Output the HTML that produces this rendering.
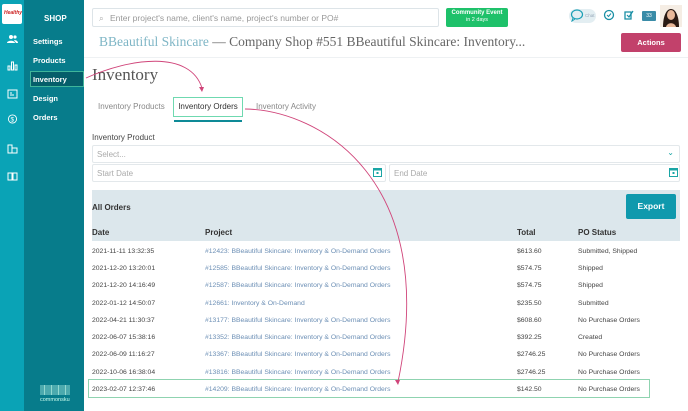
<!DOCTYPE html>
<html><head><meta charset="utf-8">
<style>
*{box-sizing:border-box;margin:0;padding:0}
body{width:688px;height:411px;overflow:hidden;background:#fff;font-family:"Liberation Sans",sans-serif;position:relative;color:#333}
.icol{position:absolute;left:0;top:0;width:24px;height:411px;background:#0aa3b6}
.ncol{position:absolute;left:24px;top:0;width:60px;height:411px;background:#077c8b}
.logo{position:absolute;left:2px;top:4px;width:20px;height:20px;background:#fff;border-radius:2px}
.logo span{position:absolute;left:2px;top:6px;font-size:5px;color:#c22;font-style:italic;font-weight:bold}
.nav{position:absolute;left:33px;font-size:7.5px;font-weight:bold;color:#fff}
.shop{position:absolute;left:44px;top:14px;font-size:8px;font-weight:bold;color:#fff}
.inv{position:absolute;left:30px;top:71px;width:54px;height:16px;background:#055e6a;border:1px solid #3fb59a}
.ic{position:absolute;left:7px;width:11px;height:10px}
.search{position:absolute;left:92px;top:8px;width:347px;height:19px;border:1px solid #dde4e8;border-radius:2px;font-size:8.5px;color:#999;padding:4px 0 0 17px}
.comm{position:absolute;left:446px;top:8px;width:62px;height:19px;background:#1ec16a;border-radius:2px;color:#fff;text-align:center;font-size:5.5px;line-height:7px;padding-top:2px}
.comm b{font-size:6px}
.title{position:absolute;left:99px;top:34px;font-family:"Liberation Serif",serif;font-size:13.5px;color:#666;white-space:nowrap}
.title span{color:#7fb6c6}
.act{position:absolute;left:621px;top:33px;width:60px;height:19px;background:#c2416b;color:#fff;font-size:7.5px;font-weight:bold;text-align:center;line-height:19px;border-radius:2px}
.hr{position:absolute;left:84px;top:57px;width:604px;height:1px;background:#eef1f3}
.h1{position:absolute;left:92px;top:65px;font-family:"Liberation Serif",serif;font-size:17px;color:#555}
.tab{position:absolute;top:102px;font-size:8px;color:#888}
.tabact{position:absolute;left:173px;top:97px;width:70px;height:20px;border:1px solid #6fd9b0;font-size:8px;color:#333;text-align:center;line-height:18px}
.tabline{position:absolute;left:174px;top:120px;width:68px;height:2px;background:#0e8a97}
.lbl{position:absolute;left:92px;top:133px;font-size:8px;color:#444}
.fld{position:absolute;height:18px;border:1px solid #e3e8eb;border-radius:2px;font-size:8px;color:#aaa;padding:4px 0 0 4px}
.panel{position:absolute;left:92px;top:190px;width:588px;height:51px;background:#dce7ec}
.ao{position:absolute;left:92px;top:203px;font-size:8px;font-weight:bold;color:#333}
.exp{position:absolute;left:626px;top:194px;width:50px;height:25px;background:#0f99ad;color:#fff;font-size:8.5px;font-weight:bold;text-align:center;line-height:25px;border-radius:2px}
.th{position:absolute;top:228px;font-size:8px;font-weight:bold;color:#333}
.row{position:absolute;left:92px;width:588px;font-size:6.8px;color:#444;height:17px}
.row div{position:absolute;top:3px;white-space:nowrap}
.row .p{left:113px;color:#6c8fb5}.row .t{left:425px}.row .s{left:486px}
.hl{position:absolute;left:88px;top:379px;width:562px;height:19px;border:1px solid #8fd3b0}
</style></head><body>
<div class="icol"></div><div class="ncol"></div>
<div class="logo"><span>Healthy</span></div>
<svg class="ic" style="top:34px" viewBox="0 0 11 10"><circle cx="4" cy="3" r="2" fill="#fff"/><circle cx="8" cy="3" r="1.6" fill="#fff"/><path d="M0 9c0-3 8-3 8 0zM7 6c2 0 4 1 4 3H9z" fill="#fff"/></svg>
<svg class="ic" style="top:61px" viewBox="0 0 11 10"><path d="M1 5h2v4H1zM4.5 1h2v8h-2zM8 4h2v5H8z" fill="none" stroke="#fff"/></svg>
<svg class="ic" style="top:89px" viewBox="0 0 11 10"><rect x="1" y="1" width="9" height="8" fill="none" stroke="#fff"/><path d="M3 4h2M3 6h4" stroke="#fff"/></svg>
<svg class="ic" style="top:114px" viewBox="0 0 11 11"><circle cx="5.5" cy="5.5" r="4.5" fill="none" stroke="#fff"/><text x="3.3" y="8" font-size="7" fill="#fff" font-family="Liberation Sans">$</text></svg>
<svg class="ic" style="top:144px" viewBox="0 0 11 10"><path d="M1 1h4v8H1zM5 4h5v5H5z" fill="none" stroke="#fff"/></svg>
<svg class="ic" style="top:171px" viewBox="0 0 11 10"><path d="M1 2h4v7H1zM6 2h4v7H6z" fill="none" stroke="#fff"/></svg>
<div class="shop">SHOP</div>
<div class="nav" style="top:37px">Settings</div>
<div class="nav" style="top:56px">Products</div>
<div class="inv"></div>
<div class="nav" style="top:75px">Inventory</div>
<div class="nav" style="top:94px">Design</div>
<div class="nav" style="top:113px">Orders</div>
<svg style="position:absolute;left:40px;top:385px" width="31" height="18"><g stroke="#cfe" stroke-width=".7"><path d="M1 0v10M3 0v10M4.5 0v10M6 0v10M8 0v10M10 0v10M11.5 0v10M13 0v10M15 0v10M17 0v10M18.5 0v10M20 0v10M22 0v10M24 0v10M25.5 0v10M27 0v10M29 0v10"/></g><text x="0" y="16" font-size="5.5" fill="#cfe" font-family="Liberation Sans">commonsku</text></svg>
<div class="search"><span style="position:absolute;left:6px;top:4px;color:#aaa">⌕</span>Enter project's name, client's name, project's number or PO#</div>
<div class="comm"><b>Community Event</b><br>in 2 days</div>
<div style="position:absolute;left:569px;top:9px;width:27px;height:14px;background:#e3eef2;border-radius:7px"></div>
<svg style="position:absolute;left:570px;top:9px" width="14" height="13"><ellipse cx="7" cy="5.5" rx="5.5" ry="4.5" fill="none" stroke="#1a9fb5" stroke-width="1.2"/><path d="M3 9l-1 3 3-2" fill="none" stroke="#1a9fb5"/></svg>
<div style="position:absolute;left:585px;top:13px;font-size:4.5px;color:#9ab">Chat</div>
<svg style="position:absolute;left:603px;top:9px" width="12" height="12"><circle cx="6" cy="6" r="4.5" fill="none" stroke="#1a8fa5" stroke-width="1.3"/><path d="M4 6l1.5 1.5L8 4.5" fill="none" stroke="#1a8fa5"/></svg>
<svg style="position:absolute;left:623px;top:9px" width="12" height="12"><path d="M2 3h6v7H2z" fill="none" stroke="#1a8fa5" stroke-width="1.3"/><path d="M4 6l2 2 4-6" fill="none" stroke="#1a8fa5" stroke-width="1.2"/></svg>
<div style="position:absolute;left:642px;top:11px;width:14px;height:10px;background:#3a8ca8;color:#fff;font-size:5px;text-align:center;line-height:10px;border-radius:1px">33</div>
<svg style="position:absolute;left:660px;top:5px" width="22" height="22"><rect width="22" height="22" fill="#f5ede4"/><path d="M3 22c0-10 3-18 8-18s8 8 8 18z" fill="#2a1a14"/><ellipse cx="11" cy="10" rx="4" ry="5" fill="#e8b89a"/><path d="M6 22c1-5 9-5 10 0z" fill="#e8b89a"/></svg>
<div class="title"><span>BBeautiful Skincare</span> — Company Shop #551 BBeautiful Skincare: Inventory...</div>
<div class="act">Actions</div>
<div class="hr"></div>
<div class="h1">Inventory</div>
<div class="tab" style="left:98px">Inventory Products</div>
<div class="tabact">Inventory Orders</div>
<div class="tabline"></div>
<div class="tab" style="left:256px">Inventory Activity</div>
<div class="lbl">Inventory Product</div>
<div class="fld" style="left:92px;top:145px;width:588px">Select...<span style="position:absolute;right:5px;top:2px;color:#1aa5a5;font-size:8px">⌄</span></div>
<div class="fld" style="left:92px;top:164px;width:294px">Start Date</div>
<div class="fld" style="left:389px;top:164px;width:291px">End Date</div>
<svg style="position:absolute;left:373px;top:167px" width="9" height="10"><rect x=".5" y="1.5" width="8" height="8" fill="none" stroke="#1aa5a5"/><rect x="0" y="1" width="9" height="2.5" fill="#1aa5a5"/><rect x="3.5" y="5" width="2" height="2" fill="#1aa5a5"/></svg>
<svg style="position:absolute;left:669px;top:167px" width="9" height="10"><rect x=".5" y="1.5" width="8" height="8" fill="none" stroke="#1aa5a5"/><rect x="0" y="1" width="9" height="2.5" fill="#1aa5a5"/><rect x="3.5" y="5" width="2" height="2" fill="#1aa5a5"/></svg>
<div class="panel"></div>
<div class="ao">All Orders</div>
<div class="exp">Export</div>
<div class="th" style="left:92px">Date</div>
<div class="th" style="left:205px">Project</div>
<div class="th" style="left:517px">Total</div>
<div class="th" style="left:578px">PO Status</div>
<div class="row" style="top:245px"><div>2021-11-11 13:32:35</div><div class="p">#12423: BBeautiful Skincare: Inventory &amp; On-Demand Orders</div><div class="t">$613.60</div><div class="s">Submitted, Shipped</div></div>
<div class="row" style="top:262px"><div>2021-12-20 13:20:01</div><div class="p">#12585: BBeautiful Skincare: Inventory &amp; On-Demand Orders</div><div class="t">$574.75</div><div class="s">Shipped</div></div>
<div class="row" style="top:279px"><div>2021-12-20 14:16:49</div><div class="p">#12587: BBeautiful Skincare: Inventory &amp; On-Demand Orders</div><div class="t">$574.75</div><div class="s">Shipped</div></div>
<div class="row" style="top:297px"><div>2022-01-12 14:50:07</div><div class="p">#12661: Inventory &amp; On-Demand</div><div class="t">$235.50</div><div class="s">Submitted</div></div>
<div class="row" style="top:314px"><div>2022-04-21 11:30:37</div><div class="p">#13177: BBeautiful Skincare: Inventory &amp; On-Demand Orders</div><div class="t">$608.60</div><div class="s">No Purchase Orders</div></div>
<div class="row" style="top:331px"><div>2022-06-07 15:38:16</div><div class="p">#13352: BBeautiful Skincare: Inventory &amp; On-Demand Orders</div><div class="t">$392.25</div><div class="s">Created</div></div>
<div class="row" style="top:348px"><div>2022-06-09 11:16:27</div><div class="p">#13367: BBeautiful Skincare: Inventory &amp; On-Demand Orders</div><div class="t">$2746.25</div><div class="s">No Purchase Orders</div></div>
<div class="row" style="top:366px"><div>2022-10-06 16:38:04</div><div class="p">#13816: BBeautiful Skincare: Inventory &amp; On-Demand Orders</div><div class="t">$2746.25</div><div class="s">No Purchase Orders</div></div>
<div class="row" style="top:383px"><div>2023-02-07 12:37:46</div><div class="p">#14209: BBeautiful Skincare: Inventory &amp; On-Demand Orders</div><div class="t">$142.50</div><div class="s">No Purchase Orders</div></div>
<div class="hl"></div>
<svg style="position:absolute;left:0;top:0" width="688" height="411"><g fill="none" stroke="#d0457a" stroke-width=".9"><path d="M86 78C130 58 190 50 202 88"/><path d="M245 109C320 110 440 180 398 382"/></g><path d="M199 87l3 5 2-5z" fill="#d0457a"/><path d="M395 380l3 5 2-5z" fill="#d0457a"/></svg>
</body></html>
